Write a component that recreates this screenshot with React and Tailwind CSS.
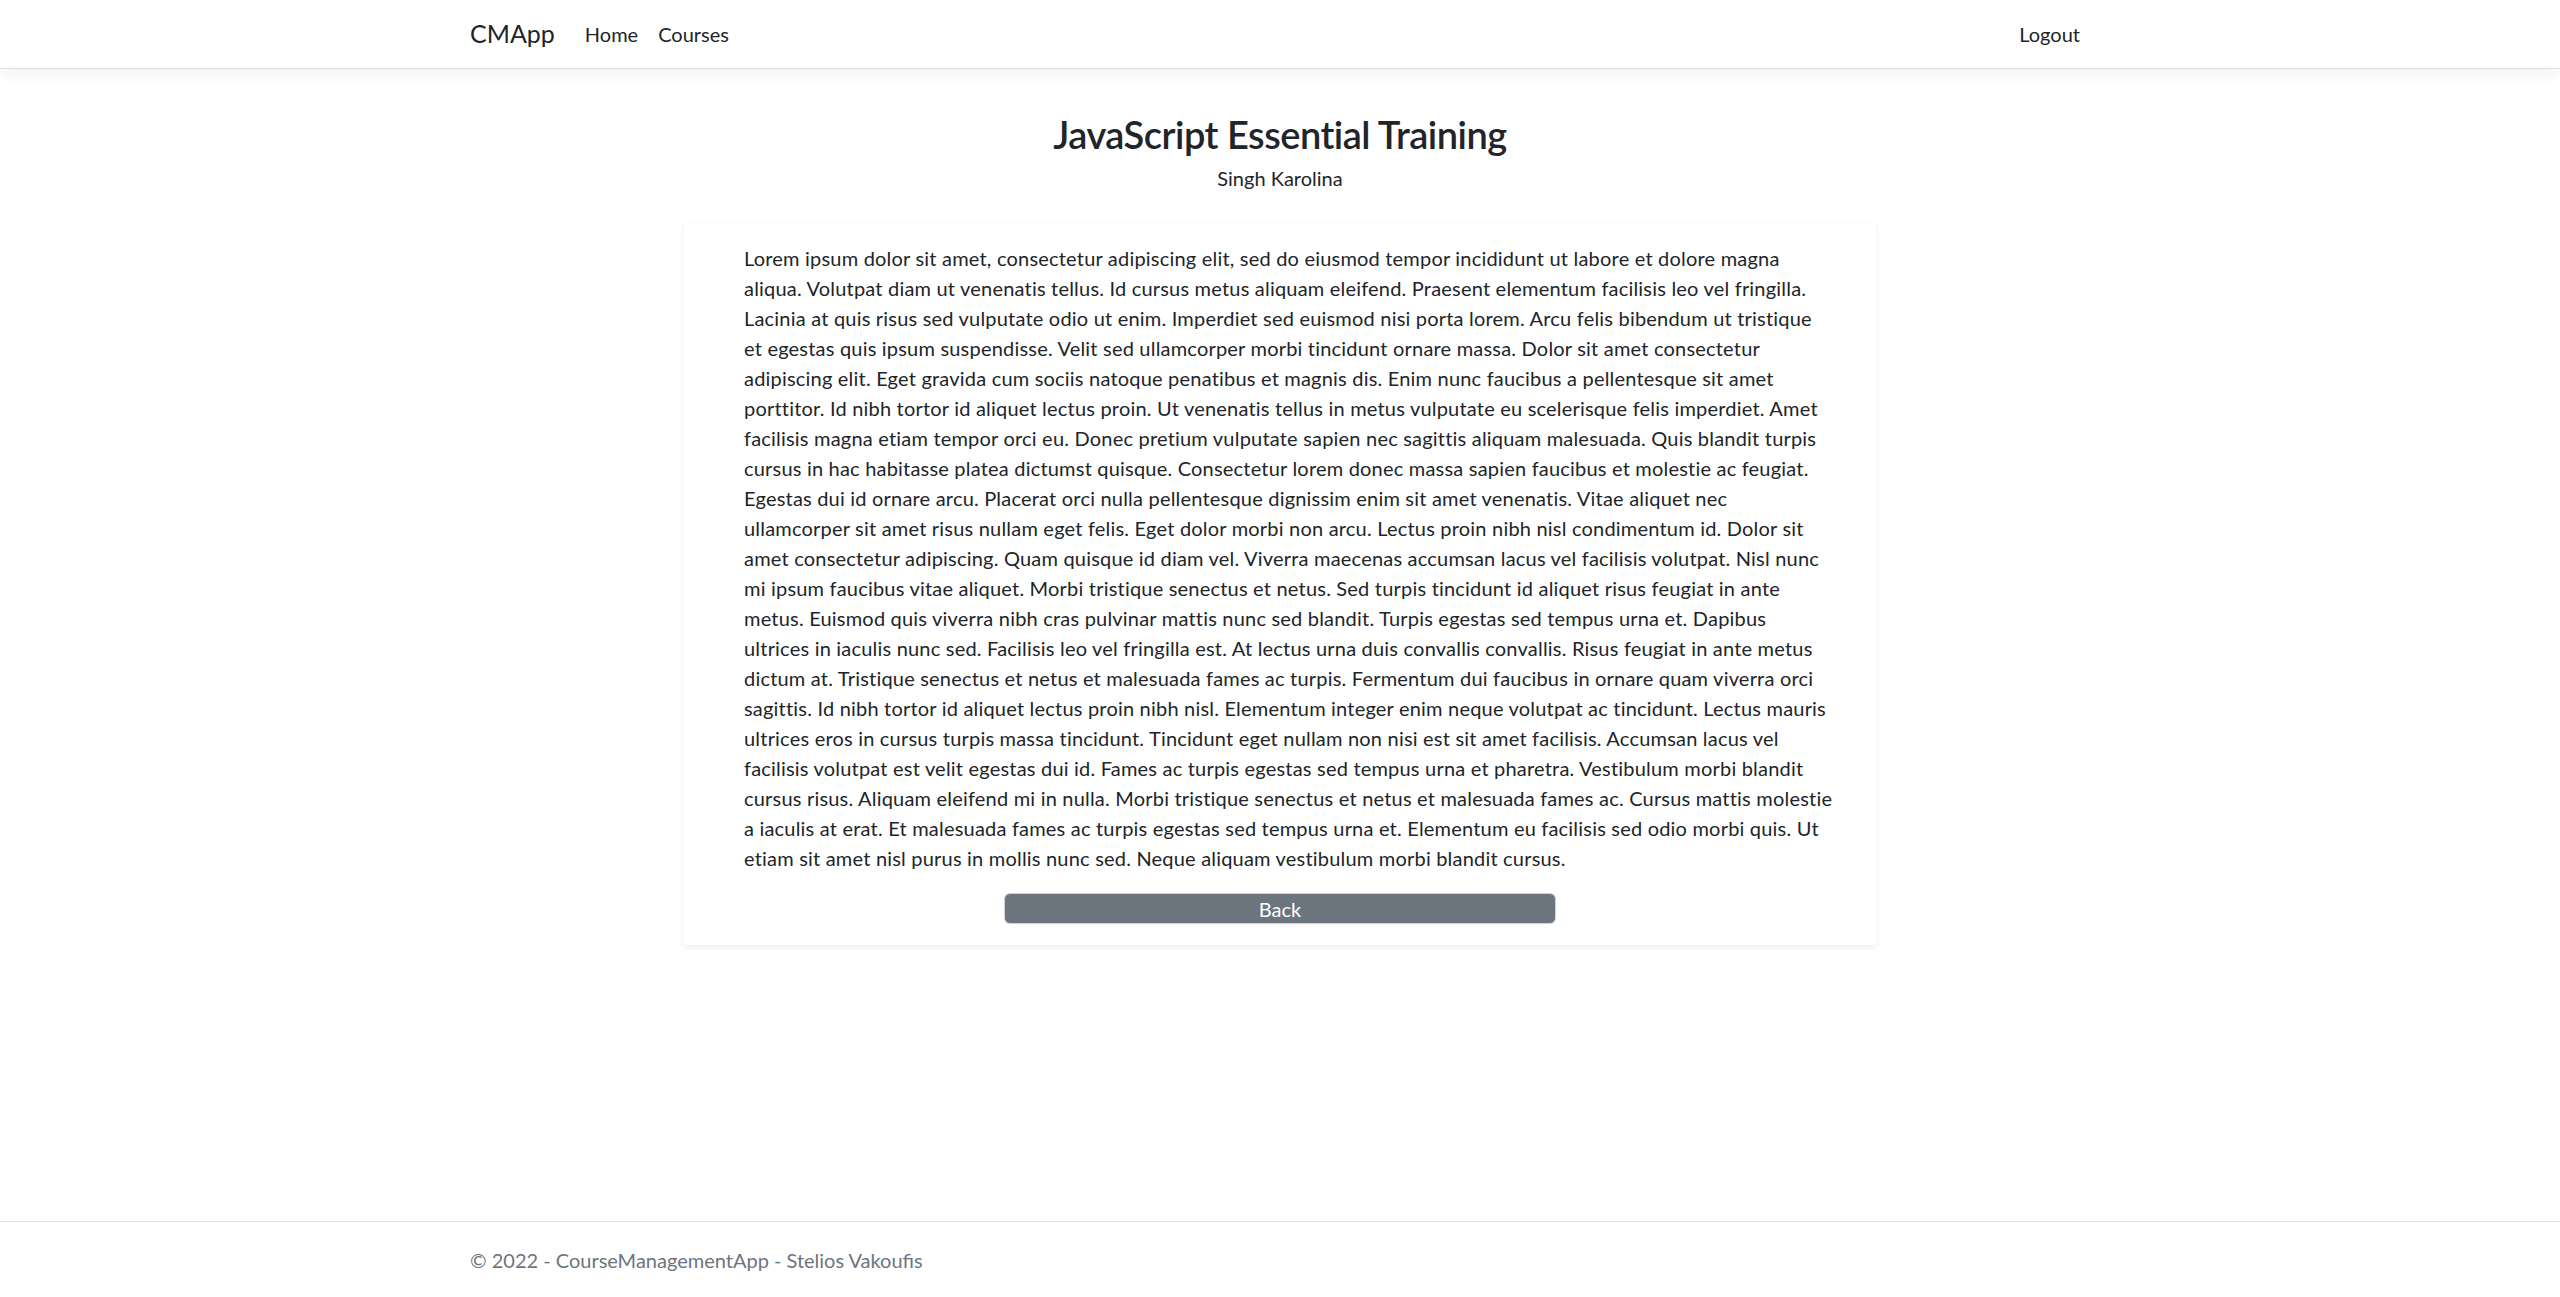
import React from "react";

const LINES = [
  "Lorem ipsum dolor sit amet, consectetur adipiscing elit, sed do eiusmod tempor incididunt ut labore et dolore magna",
  "aliqua. Volutpat diam ut venenatis tellus. Id cursus metus aliquam eleifend. Praesent elementum facilisis leo vel fringilla.",
  "Lacinia at quis risus sed vulputate odio ut enim. Imperdiet sed euismod nisi porta lorem. Arcu felis bibendum ut tristique",
  "et egestas quis ipsum suspendisse. Velit sed ullamcorper morbi tincidunt ornare massa. Dolor sit amet consectetur",
  "adipiscing elit. Eget gravida cum sociis natoque penatibus et magnis dis. Enim nunc faucibus a pellentesque sit amet",
  "porttitor. Id nibh tortor id aliquet lectus proin. Ut venenatis tellus in metus vulputate eu scelerisque felis imperdiet. Amet",
  "facilisis magna etiam tempor orci eu. Donec pretium vulputate sapien nec sagittis aliquam malesuada. Quis blandit turpis",
  "cursus in hac habitasse platea dictumst quisque. Consectetur lorem donec massa sapien faucibus et molestie ac feugiat.",
  "Egestas dui id ornare arcu. Placerat orci nulla pellentesque dignissim enim sit amet venenatis. Vitae aliquet nec",
  "ullamcorper sit amet risus nullam eget felis. Eget dolor morbi non arcu. Lectus proin nibh nisl condimentum id. Dolor sit",
  "amet consectetur adipiscing. Quam quisque id diam vel. Viverra maecenas accumsan lacus vel facilisis volutpat. Nisl nunc",
  "mi ipsum faucibus vitae aliquet. Morbi tristique senectus et netus. Sed turpis tincidunt id aliquet risus feugiat in ante",
  "metus. Euismod quis viverra nibh cras pulvinar mattis nunc sed blandit. Turpis egestas sed tempus urna et. Dapibus",
  "ultrices in iaculis nunc sed. Facilisis leo vel fringilla est. At lectus urna duis convallis convallis. Risus feugiat in ante metus",
  "dictum at. Tristique senectus et netus et malesuada fames ac turpis. Fermentum dui faucibus in ornare quam viverra orci",
  "sagittis. Id nibh tortor id aliquet lectus proin nibh nisl. Elementum integer enim neque volutpat ac tincidunt. Lectus mauris",
  "ultrices eros in cursus turpis massa tincidunt. Tincidunt eget nullam non nisi est sit amet facilisis. Accumsan lacus vel",
  "facilisis volutpat est velit egestas dui id. Fames ac turpis egestas sed tempus urna et pharetra. Vestibulum morbi blandit",
  "cursus risus. Aliquam eleifend mi in nulla. Morbi tristique senectus et netus et malesuada fames ac. Cursus mattis molestie",
  "a iaculis at erat. Et malesuada fames ac turpis egestas sed tempus urna et. Elementum eu facilisis sed odio morbi quis. Ut",
  "etiam sit amet nisl purus in mollis nunc sed. Neque aliquam vestibulum morbi blandit cursus.",
];

export default function App() {
  return (
    <div className="min-h-screen flex flex-col bg-white text-[#212529] font-['Lato','Liberation_Sans',sans-serif]">
      <header className="h-[69px] bg-white border-b border-[#dee2e6] shadow-[0_5px_15px_rgba(0,0,0,0.05)]">
        <nav className="w-[1650px] mx-auto px-[15px] h-full flex items-center">
          <a className="text-[25px] mr-[20px]">CMApp</a>
          <ul className="flex text-[20px]">
            <li><a className="px-[10px]">Home</a></li>
            <li><a className="px-[10px]">Courses</a></li>
          </ul>
          <a className="ml-auto px-[10px] text-[20px]">Logout</a>
        </nav>
      </header>

      <main className="flex flex-col items-center pt-[41px]">
        <h2 className="text-[38px] font-semibold leading-[48px] tracking-[-0.5px]">JavaScript Essential Training</h2>
        <p className="text-[20px] leading-[30px] mt-[5px]">Singh Karolina</p>

        <div className="mt-[30px] w-[1192px] bg-white shadow-[0_2px_6px_rgba(0,0,0,0.08)] px-[60px] pt-[20px] pb-[21px]">
          <p className="text-[20px] leading-[30px] tracking-[0.2px]">
            {LINES.map((l, i) => (
              <span key={i} className="block whitespace-nowrap">{l}</span>
            ))}
          </p>
          <div className="mt-[20px] flex justify-center">
            <button className="w-[552px] h-[31px] rounded-[6px] bg-[#6c757d] border border-[#d0d4d8] text-white text-[20px] leading-none flex items-center justify-center">
              Back
            </button>
          </div>
        </div>
      </main>

      <footer className="mt-auto h-[76px] border-t border-[#dee2e6]">
        <div className="w-[1650px] mx-auto px-[15px] h-full flex items-center text-[20px] text-[#6c757d]">
          © 2022 - CourseManagementApp - Stelios Vakoufis
        </div>
      </footer>
    </div>
  );
}
